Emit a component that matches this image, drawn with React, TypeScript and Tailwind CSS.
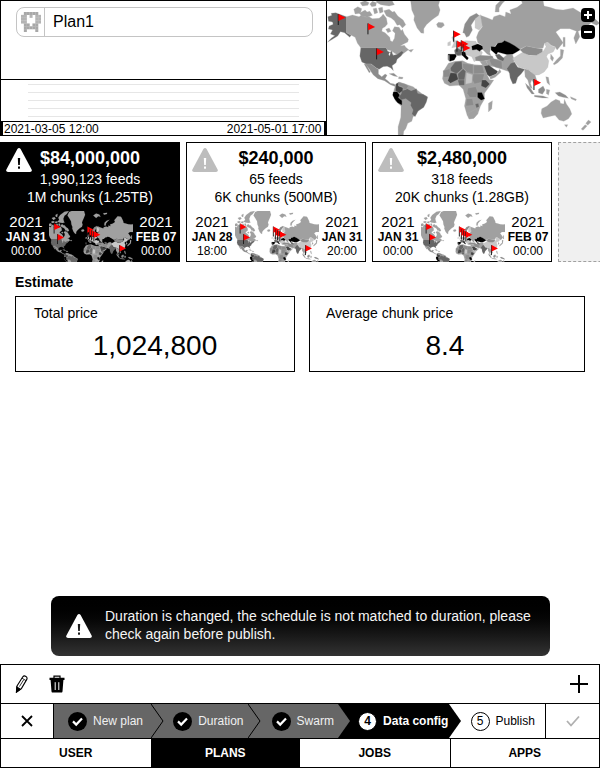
import React from "react";

type Shape = { fill: string; pts: string };

const L = "#a0a0a0";
const M = "#8c8c8c";
const D = "#666666";
const X = "#444444";
const P = "#c8c8c8";
const K = "#000000";

const LAND: Shape[] = [
  // North America
  { fill: L, pts: "62,50 80,45 100,50 110,42 118,50 130,50 140,56 160,55 168,48 172,42 182,55 185,72 178,80 170,85 168,94 178,98 188,108 192,112 194,122 200,125 206,115 208,100 200,92 206,80 220,82 226,92 230,88 236,103 248,118 246,126 232,133 224,138 236,136 240,142 250,150 263,148 256,157 247,150 240,155 226,166 212,163 200,155 185,150 180,143 105,143 95,130 88,112 75,105 62,98" },
  { fill: L, pts: "84,28 96,20 108,26 104,40 88,42" },
  { fill: L, pts: "100,40 118,30 124,36 132,34 140,46 124,52 108,48" },
  { fill: L, pts: "103,8 118,2 130,8 126,16 110,18" },
  { fill: L, pts: "132,12 140,4 152,8 150,18 138,20" },
  { fill: L, pts: "142,26 152,24 156,38 146,42" },
  { fill: L, pts: "158,24 170,22 172,36 162,40" },
  { fill: L, pts: "174,32 190,28 200,36 206,34 216,48 232,60 240,74 230,84 222,74 214,76 206,62 196,54 182,48" },
  { fill: L, pts: "150,6 165,-6 158,-22 172,-44 205,-68 238,-74 222,-50 205,-38 196,-14 200,4 206,14 190,18 165,14" },
  { fill: L, pts: "108,-20 128,-28 138,-14 120,-6" },
  { fill: L, pts: "136,-44 152,-52 150,-30 140,-28" },
  { fill: L, pts: "180,88 190,84 196,94 186,98" },
  { fill: D, pts: "6,50 18,46 16,40 30,38 62,50 62,98 76,106 72,112 56,98 44,95 36,108 20,118 5,127 17,114 27,107 14,102 20,90 8,87 10,78 22,73 20,66 8,64" },
  { fill: D, pts: "105,143 180,143 185,150 198,154 203,166 214,163 228,153 233,157 226,168 214,178 211,188 199,197 203,212 195,204 184,199 172,200 160,208 150,203 136,192 120,192 108,186 102,168" },
  { fill: "#fff", pts: "184,149 196,152 194,157 186,154" },
  { fill: "#fff", pts: "190,158 194,158 192,167 189,165" },
  { fill: "#fff", pts: "199,156 206,160 202,166" },
  { fill: M, pts: "118,192 136,192 150,203 158,208 158,222 168,230 178,222 184,226 178,236 186,242 194,250 206,252 210,260 194,254 176,242 156,236 142,224 130,206" },
  { fill: M, pts: "115,192 121,193 134,216 130,218" },
  { fill: M, pts: "190,221 204,220 216,230 204,228" },
  { fill: L, pts: "219,230 232,232 230,237 218,236" },
  { fill: L, pts: "255,5 244,-14 228,-40 240,-66 300,-90 352,-80 362,-46 350,-14 342,2 338,16 343,30 338,46 326,54 318,60 302,74 294,86 294,100 286,99 274,84 264,60 266,48 258,30" },
  { fill: L, pts: "332,73 338,67 352,68 356,76 346,84 336,82" },
  // South America
  { fill: L, pts: "210,254 220,246 238,252 262,260 274,270 290,282 304,290 300,306 293,322 276,334 268,346 262,350 258,364 246,370 240,386 234,394 232,411 217,411 217,380 225,352 226,318 210,304 202,286 205,268" },
  { fill: D, pts: "228,272 244,266 256,272 272,266 276,280 292,283 306,291 302,306 294,322 277,333 268,350 258,342 262,330 254,316 256,308 240,296 226,300 219,290 226,282" },
  { fill: X, pts: "210,252 219,247 218,258 232,263 231,272 221,280 209,272" },
  { fill: M, pts: "219,247 238,252 248,258 242,268 232,270 232,262 219,257" },
  { fill: K, pts: "203,276 214,276 221,285 217,293 228,302 228,314 216,308 207,297 201,285" },
  // Europe
  { fill: P, pts: "378,112 388,105 386,118 394,130 394,140 378,143 384,130" },
  { fill: P, pts: "366,128 374,124 374,136 366,137" },
  { fill: P, pts: "394,138 405,125 420,122 450,124 458,140 470,158 462,175 445,185 438,170 424,165 400,168 386,155" },
  { fill: D, pts: "386,150 396,144 408,152 406,165 396,167 388,162" },
  { fill: D, pts: "404,128 420,126 420,142 408,146" },
  { fill: K, pts: "367,163 389,163 392,168 385,180 372,184 367,178" },
  { fill: M, pts: "367,166 371,166 371,182 367,180" },
  { fill: K, pts: "408,156 418,157 420,166 428,174 424,180 414,170 408,164" },
  { fill: K, pts: "438,139 456,132 472,139 472,147 464,150 462,154 452,148 440,150" },
  { fill: M, pts: "411,98 417,72 432,50 452,40 462,48 446,60 436,76 440,90 430,108 422,112 416,100" },
  { fill: P, pts: "448,56 464,44 472,76 460,90 448,84" },
  { fill: L, pts: "424,-40 446,-54 470,-48 480,-30 462,-34 446,-20" },
  { fill: L, pts: "500,-56 530,-60 528,-50 506,-46" },
  // Russia and central Asia
  { fill: L, pts: "464,46 486,54 500,60 504,50 522,44 538,50 540,36 556,42 552,30 574,22 590,10 584,-4 610,-34 636,-30 652,2 655,18 672,22 690,28 712,30 742,24 768,40 806,55 822,70 812,76 796,68 776,86 757,94 762,110 750,132 744,114 752,94 732,86 704,86 690,96 700,110 712,128 694,150 688,140 676,136 666,127 656,130 652,144 630,144 602,138 582,148 568,142 548,128 534,122 528,128 514,130 506,140 495,142 492,158 496,168 484,162 472,150 470,138 456,128 452,112 458,96 470,80" },
  { fill: L, pts: "508,36 510,16 526,0 548,-8 530,10 520,24 520,36" },
  { fill: L, pts: "712,112 718,112 718,140 712,140" },
  { fill: K, pts: "496,140 508,141 516,130 528,128 536,122 550,128 566,137 583,149 572,156 560,163 546,164 530,160 516,156 512,164 503,156 496,150" },
  { fill: M, pts: "448,172 464,166 500,168 504,178 470,184 450,182" },
  { fill: L, pts: "480,182 500,176 524,180 544,164 560,164 566,180 558,200 546,214 524,206 506,200 488,198" },
  { fill: M, pts: "490,178 504,176 528,184 530,206 510,202 496,194" },
  { fill: D, pts: "508,164 520,162 536,176 532,184 516,178" },
  { fill: P, pts: "560,176 576,166 592,156 612,168 632,166 651,156 661,140 656,130 666,127 676,138 690,142 682,156 666,162 662,170 669,182 666,202 655,216 640,224 626,226 615,214 600,206 580,202 570,190" },
  { fill: M, pts: "582,149 602,138 630,144 650,146 650,156 632,166 610,166 592,158" },
  { fill: D, pts: "543,206 555,190 566,186 576,202 597,208 586,222 576,232 570,250 561,252 553,234 551,220" },
  { fill: L, pts: "596,206 608,210 616,216 628,226 634,244 626,252 618,240 614,250 620,266 612,262 606,240 598,230" },
  { fill: X, pts: "471,197 488,194 504,206 516,214 512,222 492,230 484,224" },
  { fill: L, pts: "492,230 512,222 522,208 526,216 508,232 494,238" },
  { fill: L, pts: "462,184 480,182 488,196 472,198" },
  { fill: M, pts: "599,250 612,262 626,282 618,282 604,264" },
  { fill: M, pts: "626,286 652,288 668,294 650,294 626,290" },
  { fill: M, pts: "638,268 652,258 658,270 650,283 638,278" },
  { fill: L, pts: "662,268 672,270 668,286 662,280" },
  { fill: L, pts: "660,230 668,232 672,256 664,248" },
  { fill: M, pts: "688,278 702,276 720,286 728,295 712,292 698,288" },
  { fill: L, pts: "734,290 752,298 750,302 736,296" },
  { fill: L, pts: "675,162 684,174 680,184 674,176" },
  { fill: L, pts: "682,192 692,180 704,168 704,148 714,150 710,174 696,188 686,194" },
  // Africa
  { fill: L, pts: "368,190 388,184 411,182 426,190 446,194 474,196 484,224 492,240 504,240 492,258 476,280 476,298 464,318 456,342 444,355 430,357 424,346 416,318 420,296 412,268 400,256 372,258 356,250 350,236 354,212" },
  { fill: D, pts: "374,204 388,186 408,184 410,206 392,222 374,212" },
  { fill: M, pts: "352,212 372,206 374,230 354,232" },
  { fill: X, pts: "374,218 392,220 398,238 374,250 366,242" },
  { fill: D, pts: "396,222 412,206 420,214 416,240 398,240" },
  { fill: M, pts: "410,190 442,194 442,222 424,216 412,204" },
  { fill: D, pts: "396,240 416,240 416,256 400,256" },
  { fill: P, pts: "422,218 440,224 438,248 420,252" },
  { fill: M, pts: "444,196 470,196 476,220 444,222" },
  { fill: M, pts: "442,222 476,222 470,246 446,252 440,240" },
  { fill: X, pts: "468,240 480,240 492,252 480,264 466,258" },
  { fill: M, pts: "426,264 450,260 456,276 452,292 432,292 424,280" },
  { fill: K, pts: "456,278 468,278 476,296 466,300 456,292" },
  { fill: M, pts: "422,296 440,296 444,316 420,318" },
  { fill: D, pts: "448,312 458,310 460,320 452,324" },
  { fill: L, pts: "426,340 452,326 456,340 444,355 430,357" },
  { fill: L, pts: "488,310 500,302 498,326 488,336" },
  // Oceania
  { fill: L, pts: "648,326 664,318 676,306 690,298 702,302 704,310 714,312 716,298 722,312 732,326 738,342 728,356 714,364 700,360 688,346 668,350 652,354 646,340" },
  { fill: L, pts: "716,374 726,374 722,382" },
  { fill: L, pts: "788,360 796,366 786,376 780,370" },
  { fill: L, pts: "778,374 784,378 772,391 766,387" },
];

const FLAGS: [number, number][] = [
  [38, 75],
  [127, 103],
  [153, 178],
  [384, 125],
  [394, 155],
  [407, 154],
  [413, 166],
  [625, 270],
];

const MINI_FLAGS: [number, number][] = [
  [127, 98],
  [153, 178],
  [380, 120],
  [396, 142],
  [412, 150],
  [430, 158],
  [625, 262],
];

function Land() {
  return (
    <g strokeWidth="0.8" strokeLinejoin="round">
      {LAND.map((s, i) => (
        <polygon key={i} points={s.pts} fill={s.fill} stroke={s.fill === K ? K : "#b4b4b4"} />
      ))}
    </g>
  );
}

function Flag({ x, y, k }: { x: number; y: number; k: number }) {
  return (
    <g transform={`translate(${x} ${y}) scale(${k})`}>
      <rect x="-2" y="-33" width="3" height="33" fill="#1a1a1a" />
      <polygon points="0,-33 21,-22 0,-12" fill="#ff0000" />
    </g>
  );
}

function WorldMap() {
  return (
    <svg className="block h-full w-full" viewBox="3 3 816 402" preserveAspectRatio="xMidYMid slice" aria-label="World map" role="img">
      <Land />
      {FLAGS.map(([x, y], i) => (
        <Flag key={i} x={x} y={y} k={1} />
      ))}
    </svg>
  );
}

function MiniMap() {
  return (
    <svg className="block h-[51px] w-[84px] shrink-0" viewBox="87 -74 640 389" preserveAspectRatio="xMidYMid slice" aria-hidden="true">
      <Land />
      {MINI_FLAGS.map(([x, y], i) => (
        <Flag key={i} x={x} y={y} k={2.3} />
      ))}
    </svg>
  );
}

function Warning({ className, mark }: { className: string; mark: string }) {
  return (
    <svg className={className} viewBox="0 0 26 24" aria-hidden="true">
      <path d="M11.4 1Q13-.8 14.6 1L25.6 21.4Q26.4 24 24 24H2Q-.4 24 .4 21.4Z" fill="currentColor" />
      <path d="M11.8 10h2.4l-.4 7h-1.6z" fill={mark} />
      <rect x="12" y="18.5" width="2" height="2.2" fill={mark} />
    </svg>
  );
}

const IDENTICON = [".#####.", "##.#.##", "##...##", "##...##", ".##.##.", ".#####.", ".#...#."];

function Identicon() {
  return (
    <svg className="h-5 w-5" viewBox="0 0 7 7" aria-hidden="true">
      {IDENTICON.flatMap((row, y) =>
        row.split("").map((c, x) =>
          c === "#" ? <rect key={`${x}-${y}`} x={x} y={y} width="1.05" height="1.05" fill={y > 0 && y < 4 ? "#b4b4b4" : "#a8a8a8"} /> : null
        )
      )}
    </svg>
  );
}

type Plan = {
  price: string;
  feeds: string;
  chunks: string;
  from: [string, string, string];
  to: [string, string, string];
  active?: boolean;
};

const PLANS: Plan[] = [
  { price: "$84,000,000", feeds: "1,990,123 feeds", chunks: "1M chunks (1.25TB)", from: ["2021", "JAN 31", "00:00"], to: ["2021", "FEB 07", "00:00"], active: true },
  { price: "$240,000", feeds: "65 feeds", chunks: "6K chunks (500MB)", from: ["2021", "JAN 28", "18:00"], to: ["2021", "JAN 31", "20:00"] },
  { price: "$2,480,000", feeds: "318 feeds", chunks: "20K chunks (1.28GB)", from: ["2021", "JAN 31", "00:00"], to: ["2021", "FEB 07", "00:00"] },
];

function DateStack({ value }: { value: [string, string, string] }) {
  return (
    <div className="flex flex-1 flex-col items-center pt-0.5 whitespace-nowrap">
      <span className="text-[15px] leading-[17px]">{value[0]}</span>
      <span className="text-xs leading-[14px] font-bold">{value[1]}</span>
      <span className="text-xs leading-[14px]">{value[2]}</span>
    </div>
  );
}

function PlanCard({ plan }: { plan: Plan }) {
  return (
    <article className={`relative w-[180px] shrink-0 border border-black pt-[3px] text-center ${plan.active ? "bg-black text-white" : "bg-white text-black"}`}>
      <Warning
        className={`absolute top-[5px] left-[5px] h-6 w-[26px] ${plan.active ? "text-white" : "text-[#bdbdbd]"}`}
        mark={plan.active ? "#000" : "#fff"}
      />
      <h2 className="text-lg leading-6 font-bold">{plan.price}</h2>
      <p className="text-sm leading-[18px]">{plan.feeds}</p>
      <p className="text-sm leading-[18px]">{plan.chunks}</p>
      <div className="-mb-px flex pt-[5px] pl-0.5">
        <DateStack value={plan.from} />
        <MiniMap />
        <DateStack value={plan.to} />
      </div>
    </article>
  );
}

function StepBadge({ n, state }: { n: number; state: "done" | "current" | "next" }) {
  if (state === "done") {
    return (
      <svg className="h-[19px] w-[19px] shrink-0" viewBox="0 0 19 19" aria-hidden="true">
        <circle cx="9.5" cy="9.5" r="9.5" fill="#000" />
        <path d="M5 9.4l3.2 3.2 5.8-6" fill="none" stroke="#fff" strokeWidth="2.2" />
      </svg>
    );
  }
  return (
    <span
      className={`flex h-[19px] w-[19px] shrink-0 items-center justify-center rounded-full border border-black bg-white text-xs leading-none text-black ${
        state === "current" ? "font-bold" : ""
      }`}
    >
      {n}
    </span>
  );
}

const STEPS: { label: string; state: "done" | "current" | "next"; box: string; tip: string }[] = [
  { label: "New plan", state: "done", box: "z-50 bg-[#666] pl-3.5 pr-2 text-[#f0f0f0]", tip: "#666" },
  { label: "Duration", state: "done", box: "z-40 bg-[#666] pl-[22px] pr-1 text-[#f0f0f0]", tip: "#666" },
  { label: "Swarm", state: "done", box: "z-30 bg-[#666] pl-6 pr-1 text-[#f0f0f0]", tip: "#666" },
  { label: "Data config", state: "current", box: "z-20 bg-black pl-5 text-white font-bold", tip: "#000" },
  { label: "Publish", state: "next", box: "z-10 bg-white pl-[22px] pr-2.5 text-black", tip: "" },
];

const TABS = ["USER", "PLANS", "JOBS", "APPS"];

export default function App() {
  return (
    <div className="flex min-h-screen flex-col bg-white text-black [font-family:'Liberation_Sans',Arial,sans-serif]">
      <header className="flex h-[136px] border border-black">
        <section className="flex flex-[326_1_0%] flex-col border-r border-black">
          <div className="flex-1 px-[15px] pt-1.5 pr-[13px]">
            <label className="flex h-[30px] items-stretch overflow-hidden rounded-lg border border-[#c4c4c4]">
              <span className="flex w-7 items-center justify-center border-r border-[#c4c4c4]">
                <Identicon />
              </span>
              <input className="min-w-0 flex-1 bg-transparent px-2 text-base outline-none" defaultValue="Plan1" aria-label="Plan name" />
            </label>
          </div>
          <div className="flex h-[42px] flex-col gap-[7px] border-t border-black px-[27px] pt-1">
            {[0, 1, 2, 3, 4].map((i) => (
              <div key={i} className="h-px shrink-0 bg-[#e6e6e6]" />
            ))}
          </div>
          <div className="flex h-[14px] justify-between border-x-2 border-t border-black pr-[3px] pl-px text-xs leading-[14px]">
            <time>2021-03-05 12:00</time>
            <time>2021-05-01 17:00</time>
          </div>
        </section>
        <section className="relative flex-[272_1_0%] overflow-hidden">
          <WorldMap />
          <div className="absolute top-[7px] right-1 flex flex-col gap-[3px]">
            <button type="button" aria-label="Zoom in" className="flex h-[14px] w-[14px] items-center justify-center rounded bg-black">
              <svg className="h-2 w-2" viewBox="0 0 8 8"><path d="M4 0v8M0 4h8" stroke="#fff" strokeWidth="2" /></svg>
            </button>
            <button type="button" aria-label="Zoom out" className="flex h-[14px] w-[14px] items-center justify-center rounded bg-black">
              <svg className="h-2 w-2" viewBox="0 0 8 8"><path d="M0 4h8" stroke="#fff" strokeWidth="2" /></svg>
            </button>
          </div>
        </section>
      </header>

      <section className="mt-1.5 flex gap-1.5 overflow-hidden">
        {PLANS.map((p) => (
          <PlanCard key={p.price} plan={p} />
        ))}
        <div className="w-[180px] shrink-0 border border-dashed border-[#a0a0a0] bg-[#f0f0f0]" />
      </section>

      <section className="px-[15px] pt-[11px]">
        <h2 className="text-sm leading-[18px] font-bold">Estimate</h2>
        <div className="mt-[5px] flex gap-3.5">
          <div className="flex-[280_1_0%] border border-black pb-[7px]">
            <p className="pt-[7px] pl-[18px] text-sm leading-[18px]">Total price</p>
            <p className="pt-1.5 text-center text-[28px] leading-9">1,024,800</p>
          </div>
          <div className="flex-[276_1_0%] border border-black pb-[7px]">
            <p className="pt-[7px] pl-4 text-sm leading-[18px]">Average chunk price</p>
            <p className="pt-1.5 pr-1 text-center text-[28px] leading-9">8.4</p>
          </div>
        </div>
      </section>

      <div role="alert" className="mr-[50px] mb-2 ml-[51px] mt-auto flex items-center gap-[13px] rounded-lg bg-gradient-to-b from-black to-[#333] px-[15px] py-[11px] text-sm leading-[18px] text-[#f5f5f5]">
        <Warning className="h-6 w-[26px] shrink-0 text-white" mark="#1a1a1a" />
        <p className="pb-0.5">Duration is changed, the schedule is not matched to duration, please check again before publish.</p>
      </div>

      <footer className="border border-black">
        <div className="flex h-[38px] items-center px-3.5">
          <button type="button" aria-label="Edit" className="flex h-5 w-4 items-center">
            <svg className="h-[18px] w-[13px]" viewBox="0 0 13 18" fill="none" stroke="#000" strokeWidth="1.1">
              <path d="M2 11L7.8 1.8Q9 .3 10.9 1.4Q12.6 2.6 11.8 4.4L6.4 13.6L1.6 16.8Z" />
              <path d="M7 3.2L11 5.6M4.4 11.6L8.8 4.6" strokeWidth="0.8" />
              <path d="M1.8 12L5.4 14.2L1.4 17.2Z" fill="#000" />
            </svg>
          </button>
          <button type="button" aria-label="Delete" className="ml-[18px] flex h-5 w-4 items-center">
            <svg className="h-[18px] w-4" viewBox="0 0 16 18">
              <path d="M5 3V1.2h6V3" fill="none" stroke="#000" strokeWidth="1.2" />
              <path d="M.5 2.8h15v2.2H.5zM1.6 5h12.8l-.9 11.4q-.2 1.2-1.4 1.2H3.9q-1.2 0-1.4-1.2z" fill="#000" />
              <path d="M6.2 7.2v7.8M9.8 7.2v7.8" stroke="#fff" strokeWidth="1" />
            </svg>
          </button>
          <button type="button" aria-label="Add" className="-mr-[3px] ml-auto flex h-5 w-[18px] items-center">
            <svg className="h-[18px] w-[18px]" viewBox="0 0 18 18"><path d="M9 0v18M0 9h18" stroke="#000" strokeWidth="2" /></svg>
          </button>
        </div>

        <div className="flex h-9 border-y border-black">
          <button type="button" aria-label="Close" className="flex w-[53px] shrink-0 items-center justify-center border-r border-black">
            <svg className="h-3 w-3" viewBox="0 0 12 12"><path d="M1 1l10 10M11 1L1 11" stroke="#000" strokeWidth="1.8" /></svg>
          </button>
          <ol className="isolate flex flex-1">
            {STEPS.map((s, i) => (
              <li key={s.label} className={`relative flex flex-auto items-center gap-1.5 text-xs whitespace-nowrap ${s.box}`}>
                <StepBadge n={i + 1} state={s.state} />
                <span>{s.label}</span>
                {s.tip && (
                  <svg className="absolute top-0 left-full h-full w-[13px]" viewBox="0 0 13 34" preserveAspectRatio="none" aria-hidden="true">
                    <path d="M-1 0H0L12 17L0 34H-1Z" fill={s.tip} />
                    {i < 2 && <path d="M0 0L12 17L0 34" fill="none" stroke="#000" />}
                  </svg>
                )}
              </li>
            ))}
          </ol>
          <button type="button" aria-label="Confirm" className="flex w-[54px] shrink-0 items-center justify-center border-l border-black">
            <svg className="h-3 w-[14px]" viewBox="0 0 14 12"><path d="M1 6l4 4.5L13 1.5" fill="none" stroke="#b0b0b0" strokeWidth="1.8" /></svg>
          </button>
        </div>

        <nav className="grid h-7 grid-cols-4 text-xs font-bold">
          {TABS.map((t, i) => (
            <button key={t} type="button" className={`${i === 1 ? "bg-black text-white" : ""} ${i === 3 ? "border-l border-black" : ""}`}>
              {t}
            </button>
          ))}
        </nav>
      </footer>
    </div>
  );
}
